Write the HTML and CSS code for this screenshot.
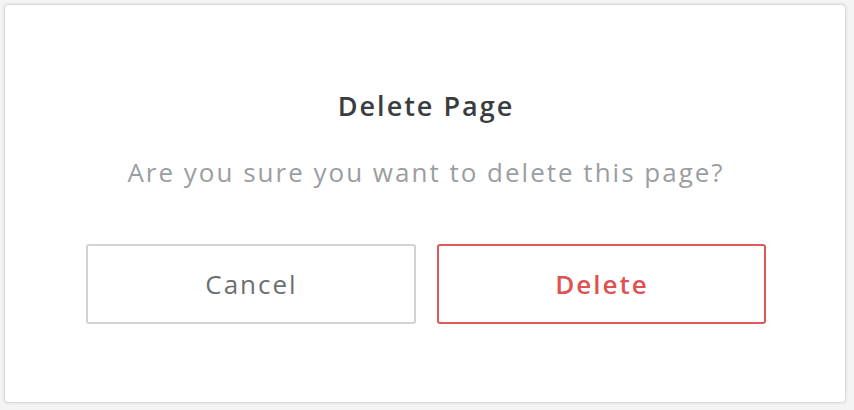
FILE: index.html
```html
<!DOCTYPE html>
<html>
<head>
<meta charset="utf-8">
<link rel="stylesheet" href="styles.css">
</head>
<body>
<div class="dialog">
  <h1 class="title">Delete Page</h1>
  <p class="message">Are you sure you want to delete this page?</p>
  <div class="actions">
    <button class="btn btn-cancel">Cancel</button>
    <button class="btn btn-delete">Delete</button>
  </div>
</div>
</body>
</html>
```
FILE: styles.css
```css
html, body {
  margin: 0;
  padding: 0;
  background: #f4f4f4;
}
body {
  padding: 4px 8px 7px 4px;
  font-family: "Open Sans", "Liberation Sans", sans-serif;
}
.dialog {
  box-sizing: border-box;
  width: 842px;
  height: 399px;
  background: #fff;
  border: 1px solid #dcdcdc;
  border-radius: 4px;
  box-shadow: 0 0 3px rgba(0,0,0,0.12);
  display: flex;
  flex-direction: column;
  align-items: center;
  padding-top: 84px;
}
.title {
  margin: 0;
  font-size: 27px;
  font-weight: 600;
  color: #3a3d40;
  line-height: 34px;
  letter-spacing: 2px;
  padding-left: 2px;
}
.message {
  margin: 32px 0 0;
  font-size: 26px;
  font-weight: 400;
  color: #9b9ea0;
  line-height: 34px;
  letter-spacing: 2px;
  padding-left: 2px;
}
.actions {
  display: flex;
  gap: 21px;
  margin-top: 55px;
  padding-left: 1px;
}
.btn {
  box-sizing: border-box;
  width: 330px;
  height: 80px;
  background: #fff;
  border-radius: 3px;
  font-family: inherit;
  font-size: 26px;
  letter-spacing: 2px;
  padding: 0 0 0 2px;
  cursor: pointer;
}
.btn-delete {
  width: 329px;
}
.btn-cancel {
  border: 2px solid #d2d2d2;
  color: #6c6f72;
  font-weight: 400;
}
.btn-delete {
  border: 2px solid #e05757;
  color: #e05252;
  font-weight: 600;
}
```
